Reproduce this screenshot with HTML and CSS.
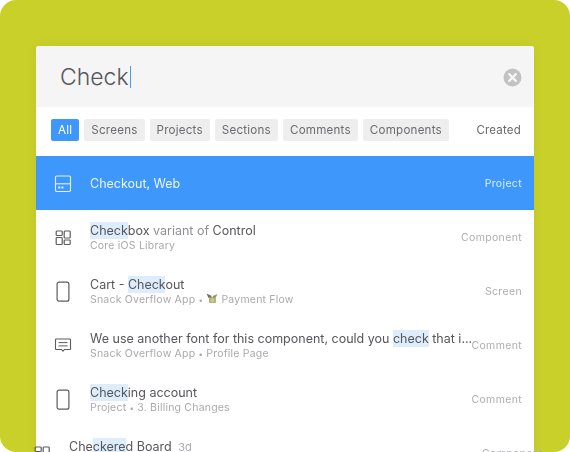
FILE: index.html
```html
<!DOCTYPE html>
<html lang="en">
<head>
<meta charset="utf-8">
<title>Search</title>
<link rel="stylesheet" href="styles.css">
</head>
<body>
<div class="frame">
  <div class="card">
    <div class="search">
      <div class="query">Check<span class="caret"></span></div>
      <svg class="clear" width="19" height="19" viewBox="0 0 19 19"><circle cx="9.5" cy="9.5" r="9" fill="#c2c2c4"/><path d="M6.2 6.2l6.6 6.6M12.8 6.2l-6.6 6.6" stroke="#f5f5f5" stroke-width="2.4" stroke-linecap="round"/></svg>
    </div>
    <div class="filters">
      <span class="chip chip-on">All</span>
      <span class="chip">Screens</span>
      <span class="chip">Projects</span>
      <span class="chip">Sections</span>
      <span class="chip">Comments</span>
      <span class="chip">Components</span>
      <span class="sort">Created</span>
    </div>
    <div class="row row-on">
      <svg class="icon" width="18" height="18" viewBox="0 0 18 18" fill="none" stroke="currentColor" stroke-width="1.1"><rect x="1.5" y="1" width="15" height="15.5" rx="1.2"/><path d="M1.5 8.8h15"/><path d="M4.2 12.600h2M7.400 12.600h2" stroke-width="2"/></svg>
      <div class="text"><div class="title">Checkout, Web</div></div>
      <div class="kind">Project</div>
    </div>
    <div class="row">
      <svg class="icon" width="18" height="18" viewBox="0 0 18 18" fill="none" stroke="currentColor" stroke-width="1.2"><rect x="2.2" y="2" width="6" height="4.5" rx=".8"/><rect x="10.2" y="2" width="6" height="7" rx=".8"/><rect x="2.2" y="8.5" width="6" height="7" rx=".8"/><rect x="10.2" y="11" width="6" height="4.5" rx=".8"/></svg>
      <div class="text">
        <div class="title"><mark>Check</mark>box <span class="soft">variant of</span> Control</div>
        <div class="sub">Core iOS Library</div>
      </div>
      <div class="kind">Component</div>
    </div>
    <div class="row">
      <svg class="icon" width="18" height="22" viewBox="0 0 18 22" fill="none" stroke="currentColor" stroke-width="1.2"><rect x="3.1" y="1.2" width="11.8" height="19" rx="2"/></svg>
      <div class="text">
        <div class="title">Cart - <mark>Check</mark>out</div>
        <div class="sub">Snack Overflow App <span class="dot">•</span> <svg class="emoji" width="12" height="11" viewBox="0 0 12 11"><path d="M.5 .5l4.500 2 1 2.500-3.500 0z" fill="#77745c"/><path d="M11.500 1L7 3 6 5l3.500 0z" fill="#96906c"/><rect x="3" y="4.500" width="7" height="5.500" rx="1" fill="#aeb67e"/><circle cx="6.500" cy="7.200" r="1.600" fill="#e3c77a"/></svg> Payment Flow</div>
      </div>
      <div class="kind">Screen</div>
    </div>
    <div class="row">
      <svg class="icon" width="18" height="18" viewBox="0 0 18 18" fill="none" stroke="currentColor" stroke-width="1.1"><path d="M2.2 2h13.600a.7.7 0 0 1 .7.7v9.100a.7.7 0 0 1-.7.7h-5.300L9 14.200l-1.500-1.700H2.200a.7.7 0 0 1-.7-.7V2.700a.7.7 0 0 1 .7-.7z"/><path d="M4.500 5.600h9M4.500 8.900h9" stroke-width="1"/></svg>
      <div class="text">
        <div class="title">We use another font for this component, could you <mark>check</mark> that i...</div>
        <div class="sub">Snack Overflow App <span class="dot">•</span> Profile Page</div>
      </div>
      <div class="kind">Comment</div>
    </div>
    <div class="row">
      <svg class="icon" width="18" height="22" viewBox="0 0 18 22" fill="none" stroke="currentColor" stroke-width="1.2"><rect x="3.1" y="1.2" width="11.8" height="19" rx="2"/></svg>
      <div class="text">
        <div class="title"><mark>Check</mark>ing account</div>
        <div class="sub">Project <span class="dot">•</span> 3. Billing Changes</div>
      </div>
      <div class="kind">Comment</div>
    </div>
    <div class="row row-wide">
      <svg class="icon" width="18" height="18" viewBox="0 0 18 18" fill="none" stroke="currentColor" stroke-width="1.2"><rect x="2.2" y="2" width="6" height="4.5" rx=".8"/><rect x="10.2" y="2" width="6" height="7" rx=".8"/><rect x="2.2" y="8.5" width="6" height="7" rx=".8"/><rect x="10.2" y="11" width="6" height="4.5" rx=".8"/></svg>
      <div class="text text-top"><div class="title">Che<mark>ckere</mark>d Board <span class="age">3d</span></div></div>
      <div class="kind">Component</div>
    </div>
  </div>
</div>
</body>
</html>
```
FILE: styles.css
```css
* { box-sizing: border-box; }
html, body { margin: 0; padding: 0; background: #fff; }
body { width: 570px; height: 452px; overflow: hidden; font-family: Inter, "Liberation Sans", sans-serif; }
.frame { width: 570px; height: 452px; padding: 46px 36px 0; background: #cad02a; border-radius: 16px; overflow: hidden; }
.card { width: 498px; height: 460px; background: #fff; border-radius: 3px 3px 0 0; box-shadow: 0 0 12px rgba(0,0,0,.06); filter: blur(.45px); }
.search { height: 61px; padding: 1px 12px 0 24px; display: flex; align-items: center; justify-content: space-between; background: #f5f5f5; border-radius: 3px 3px 0 0; }
.query { display: flex; align-items: center; font-size: 23px; font-weight: 300; color: #57575c; }
.caret { width: 1px; height: 22px; margin-left: 1px; background: #4a9bf5; }
.clear { flex: none; }
.filters { height: 49px; padding: 0 13px 4px 15px; display: flex; align-items: center; gap: 5px; }
.chip { height: 22px; padding: 0 7px; display: flex; align-items: center; font-size: 11.6px; letter-spacing: .22px; color: #6b6b70; background: #eeeeef; border-radius: 2px; }
.chip-on { color: #fff; background: #3e97fb; }
.sort { margin-left: auto; font-size: 11.5px; letter-spacing: .2px; color: #68686d; }
.row { height: 54px; padding: 0 12px 0 18px; display: flex; align-items: center; color: #56565b; }
.row-on { color: #fff; background: #3e97fb; }
.row-on .title { color: #eaf4ff; }
.row-on .kind { color: #dcecff; }
.row-wide { margin: 0 -21px; }
.icon { flex: none; margin-top: 1px; color: #5c5c60; }
.row-on .icon { color: #e3f0ff; }
.text { flex: 1; min-width: 0; margin: 2px 0 0 18px; }
.text-top { padding-bottom: 14px; }
.title { font-size: 12.5px; line-height: 16px; white-space: nowrap; color: #56565b; }
.sub { font-size: 10.5px; line-height: 14px; letter-spacing: .2px; color: #aaaaae; white-space: nowrap; }
.soft { color: #8f8f94; }
.age { margin-left: 3px; font-size: 11px; color: #aaaaae; }
.dot { font-size: 8px; }
.emoji { vertical-align: -1px; }
mark { color: inherit; background: #deedfc; padding: 1px 0; }
.kind { flex: none; align-self: flex-start; margin: 21px 0 0 auto; font-size: 10.5px; letter-spacing: .35px; color: #aeaeb2; }
```
